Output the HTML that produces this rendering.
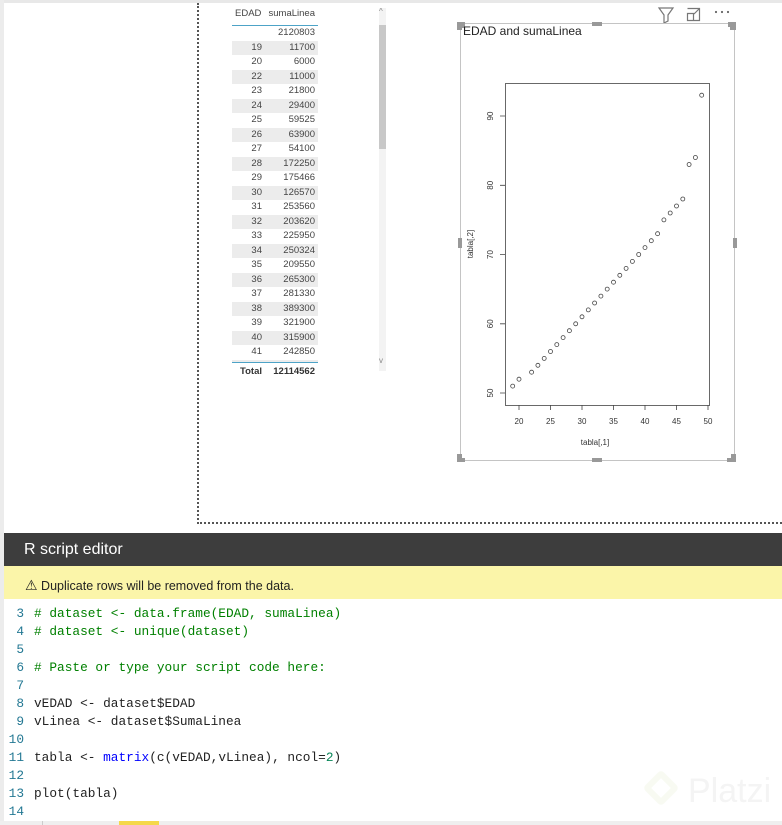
<!DOCTYPE html>
<html><head><meta charset="utf-8"><style>
*{margin:0;padding:0;box-sizing:border-box}
body{width:782px;height:825px;overflow:hidden;background:#fff;position:relative;font-family:"Liberation Sans",sans-serif}
.abs{position:absolute}
.row{position:absolute;left:232px;width:86px;height:14.5px;font-size:9.5px;color:#444;line-height:14.5px}
.row.g{background:#ececec}
.row .a{position:absolute;right:56px}
.row .b{position:absolute;right:3px}
.code{position:absolute;left:0;top:605px;font-family:"Liberation Mono",monospace;font-size:12.8px;line-height:18px;white-space:pre;color:#222}
.ln{display:inline-block;width:24px;text-align:right;color:#237893;margin-right:10px}
.c{color:#008000}.k{color:#0000ff}.n{color:#098658}
</style></head><body>
<div class="abs" style="left:0;top:0;width:782px;height:3px;background:#e8e8e8"></div>
<div class="abs" style="left:0;top:0;width:4px;height:825px;background:#ececec"></div>
<div class="abs" style="left:197px;top:3px;width:0;height:521px;border-left:2px dotted #555"></div>
<div class="abs" style="left:197px;top:522px;width:585px;height:0;border-top:2px dotted #555"></div>

<div class="abs" style="left:232px;top:8px;width:86px;font-size:9.5px;color:#444">
<span class="abs" style="left:3px">EDAD</span><span class="abs" style="right:3px">sumaLinea</span></div>
<div class="abs" style="left:232px;top:25px;width:86px;height:1px;background:#4da3c7"></div>
<div class="row" style="top:26px"><span class="b">2120803</span></div>
<div class="row g" style="top:40.5px"><span class="a">19</span><span class="b">11700</span></div>
<div class="row" style="top:55px"><span class="a">20</span><span class="b">6000</span></div>
<div class="row g" style="top:69.5px"><span class="a">22</span><span class="b">11000</span></div>
<div class="row" style="top:84px"><span class="a">23</span><span class="b">21800</span></div>
<div class="row g" style="top:98.5px"><span class="a">24</span><span class="b">29400</span></div>
<div class="row" style="top:113px"><span class="a">25</span><span class="b">59525</span></div>
<div class="row g" style="top:127.5px"><span class="a">26</span><span class="b">63900</span></div>
<div class="row" style="top:142px"><span class="a">27</span><span class="b">54100</span></div>
<div class="row g" style="top:156.5px"><span class="a">28</span><span class="b">172250</span></div>
<div class="row" style="top:171px"><span class="a">29</span><span class="b">175466</span></div>
<div class="row g" style="top:185.5px"><span class="a">30</span><span class="b">126570</span></div>
<div class="row" style="top:200px"><span class="a">31</span><span class="b">253560</span></div>
<div class="row g" style="top:214.5px"><span class="a">32</span><span class="b">203620</span></div>
<div class="row" style="top:229px"><span class="a">33</span><span class="b">225950</span></div>
<div class="row g" style="top:243.5px"><span class="a">34</span><span class="b">250324</span></div>
<div class="row" style="top:258px"><span class="a">35</span><span class="b">209550</span></div>
<div class="row g" style="top:272.5px"><span class="a">36</span><span class="b">265300</span></div>
<div class="row" style="top:287px"><span class="a">37</span><span class="b">281330</span></div>
<div class="row g" style="top:301.5px"><span class="a">38</span><span class="b">389300</span></div>
<div class="row" style="top:316px"><span class="a">39</span><span class="b">321900</span></div>
<div class="row g" style="top:330.5px"><span class="a">40</span><span class="b">315900</span></div>
<div class="row" style="top:345px"><span class="a">41</span><span class="b">242850</span></div>
<div class="row g" style="top:359.5px;height:3px"></div>
<div class="abs" style="left:232px;top:362px;width:86px;height:1px;background:#4da3c7"></div>
<div class="abs" style="left:232px;top:366px;width:86px;font-size:9.5px;font-weight:bold;color:#333">
<span class="abs" style="left:8px">Total</span><span class="abs" style="right:3px">12114562</span></div>
<div class="abs" style="left:379px;top:8px;width:7px;height:363px;background:#f3f3f3"></div>
<div class="abs" style="left:379px;top:25px;width:7px;height:124px;background:#c8c8c8"></div>
<div class="abs" style="left:379px;top:7px;font-size:8px;color:#888">^</div>
<div class="abs" style="left:379px;top:356px;font-size:8px;color:#888">v</div>

<svg class="abs" style="left:0;top:0" width="782" height="530">
<g stroke="#777" fill="none" stroke-width="1.2">
<path d="M659 8h14l-5 7v6l-4 2v-8z"/>
<path d="M687.5 13.5v7h6v-7zM687.5 8.5h12v12h-6M694 14l5-5M696 8.5h3.5v3.5"/>
</g>
<g fill="#666"><circle cx="716" cy="12" r="1.1"/><circle cx="722" cy="12" r="1.1"/><circle cx="728" cy="12" r="1.1"/></g>
<rect x="460.5" y="23.5" width="274" height="437" fill="none" stroke="#c4c4c4"/>
<g fill="#999"><rect x="457" y="22" width="8" height="6"/><rect x="457" y="22" width="5" height="8"/>
<rect x="592" y="22" width="10" height="4"/><rect x="730" y="22" width="6" height="8"/><rect x="728" y="22" width="8" height="5"/>
<rect x="458" y="238" width="4" height="10"/><rect x="733" y="238" width="4" height="10"/>
<rect x="457" y="454" width="5" height="8"/><rect x="457" y="458" width="8" height="4"/>
<rect x="592" y="458" width="10" height="4"/><rect x="731" y="454" width="5" height="8"/><rect x="727" y="458" width="9" height="4"/></g>
<text x="463" y="35" font-size="12" fill="#222" font-family="Liberation Sans">EDAD and sumaLinea</text>
<rect x="505.5" y="83.5" width="204" height="322" fill="none" stroke="#444" stroke-width="0.8"/>
<g stroke="#444" stroke-width="0.8">
<path d="M519 405v5M550.5 405v5M582 405v5M613.5 405v5M645 405v5M676.5 405v5M708 405v5"/>
<path d="M505 393h-5M505 323.8h-5M505 254.5h-5M505 185.3h-5M505 116h-5"/>
</g>
<g font-size="8" fill="#333" font-family="Liberation Sans" text-anchor="middle">
<text x="519" y="424">20</text><text x="550.5" y="424">25</text><text x="582" y="424">30</text><text x="613.5" y="424">35</text><text x="645" y="424">40</text><text x="676.5" y="424">45</text><text x="708" y="424">50</text>
<text x="595" y="445">tabla[,1]</text>
<text transform="translate(493,393) rotate(-90)">50</text><text transform="translate(493,323.8) rotate(-90)">60</text><text transform="translate(493,254.5) rotate(-90)">70</text><text transform="translate(493,185.3) rotate(-90)">80</text><text transform="translate(493,116) rotate(-90)">90</text>
<text transform="translate(473,244) rotate(-90)">tabla[,2]</text>
</g>
<g fill="none" stroke="#444" stroke-width="0.8">
<circle cx="512.7" cy="386.1" r="2"/><circle cx="519" cy="379.2" r="2"/><circle cx="531.6" cy="372.2" r="2"/><circle cx="537.9" cy="365.3" r="2"/><circle cx="544.2" cy="358.4" r="2"/><circle cx="550.5" cy="351.5" r="2"/><circle cx="556.8" cy="344.6" r="2"/><circle cx="563.1" cy="337.6" r="2"/><circle cx="569.4" cy="330.7" r="2"/><circle cx="575.7" cy="323.8" r="2"/><circle cx="582" cy="316.8" r="2"/><circle cx="588.3" cy="309.9" r="2"/><circle cx="594.6" cy="303" r="2"/><circle cx="600.9" cy="296.1" r="2"/><circle cx="607.2" cy="289.1" r="2"/><circle cx="613.5" cy="282.2" r="2"/><circle cx="619.8" cy="275.3" r="2"/><circle cx="626.1" cy="268.4" r="2"/><circle cx="632.4" cy="261.4" r="2"/><circle cx="638.7" cy="254.5" r="2"/><circle cx="645" cy="247.6" r="2"/><circle cx="651.3" cy="240.7" r="2"/><circle cx="657.6" cy="233.7" r="2"/><circle cx="663.9" cy="219.9" r="2"/><circle cx="670.2" cy="213" r="2"/><circle cx="676.5" cy="206" r="2"/><circle cx="682.8" cy="199" r="2"/><circle cx="689.1" cy="164.5" r="2"/><circle cx="695.4" cy="157.5" r="2"/><circle cx="701.7" cy="95.2" r="2"/>
</g>
</svg>

<div class="abs" style="left:4px;top:533px;width:778px;height:33px;background:#3d3d3d;color:#fff;font-size:16px;line-height:33px;padding-left:20px">R script editor</div>
<div class="abs" style="left:4px;top:566px;width:778px;height:33px;background:#fbf5a9;font-size:12.5px;line-height:38px;padding-left:21px;color:#222"><span style="font-size:14px">⚠</span> Duplicate rows will be removed from the data.</div>
<div class="code"><span class="ln">3</span><span class="c"># dataset &lt;- data.frame(EDAD, sumaLinea)</span>
<span class="ln">4</span><span class="c"># dataset &lt;- unique(dataset)</span>
<span class="ln">5</span>
<span class="ln">6</span><span class="c"># Paste or type your script code here:</span>
<span class="ln">7</span>
<span class="ln">8</span>vEDAD &lt;- dataset$EDAD
<span class="ln">9</span>vLinea &lt;- dataset$SumaLinea
<span class="ln">10</span>
<span class="ln">11</span>tabla &lt;- <span class="k">matrix</span>(c(vEDAD,vLinea), ncol=<span class="n">2</span>)
<span class="ln">12</span>
<span class="ln">13</span>plot(tabla)
<span class="ln">14</span></div>
<div class="abs" style="left:648px;top:775px;width:26px;height:26px;border:6px solid #f8faf2;transform:rotate(45deg);border-radius:4px"></div>
<div class="abs" style="left:688px;top:772px;font-size:34px;color:#f4f4f4">Platzi</div>
<div class="abs" style="left:0;top:821px;width:782px;height:4px;background:#efefef"></div>
<div class="abs" style="left:42px;top:821px;width:1px;height:4px;background:#ccc"></div>
<div class="abs" style="left:119px;top:821px;width:40px;height:4px;background:#f5d84a"></div>
</body></html>
